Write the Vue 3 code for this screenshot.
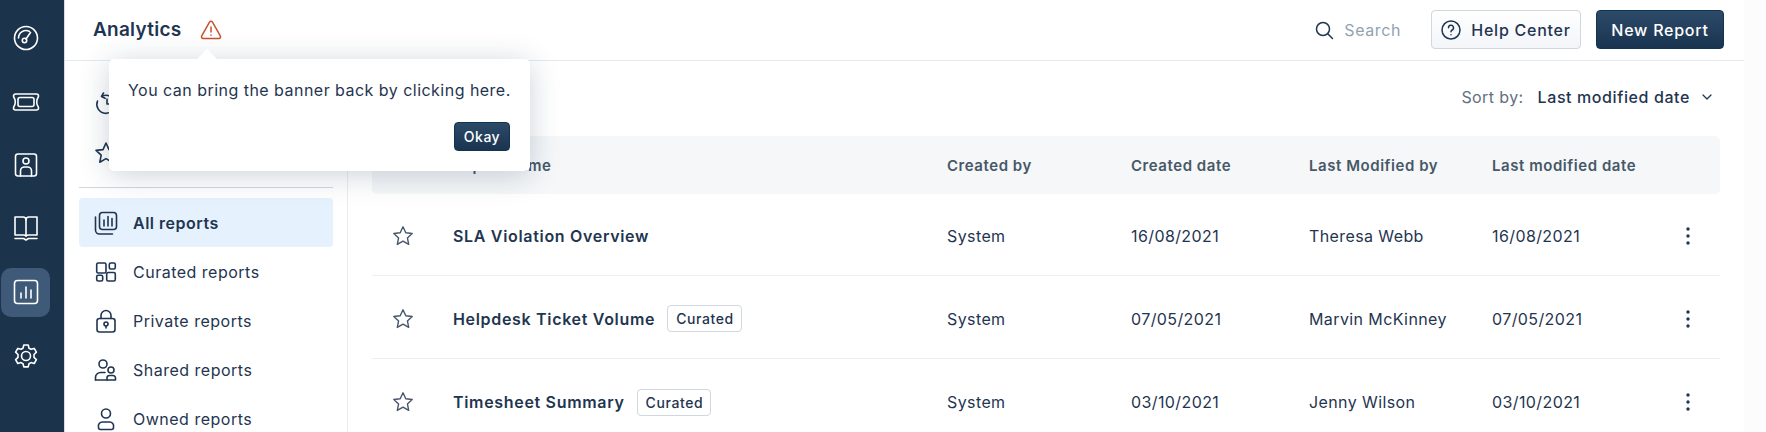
<script setup>
const navItems = [
  { key: 'gauge', active: false },
  { key: 'ticket', active: false },
  { key: 'contact', active: false },
  { key: 'book', active: false },
  { key: 'chart', active: true },
  { key: 'gear', active: false },
]
const sideItems = [
  { label: 'All reports', icon: 'all', active: true },
  { label: 'Curated reports', icon: 'curated' },
  { label: 'Private reports', icon: 'private' },
  { label: 'Shared reports', icon: 'shared' },
  { label: 'Owned reports', icon: 'owned' },
]
const rows = [
  { name: 'SLA Violation Overview', curated: false, by: 'System', created: '16/08/2021', modBy: 'Theresa Webb', mod: '16/08/2021' },
  { name: 'Helpdesk Ticket Volume', curated: true, by: 'System', created: '07/05/2021', modBy: 'Marvin McKinney', mod: '07/05/2021' },
  { name: 'Timesheet Summary', curated: true, by: 'System', created: '03/10/2021', modBy: 'Jenny Wilson', mod: '03/10/2021' },
]
</script>

<template>
  <div class="app">
    <aside class="rail">
      <div v-for="n in navItems" :key="n.key" class="rail-item" :class="{ on: n.active }">
        <svg width="28" height="28" viewBox="0 0 28 28" fill="none" stroke="#fff" stroke-width="1.6" stroke-linecap="round" stroke-linejoin="round">
          <template v-if="n.key === 'gauge'">
            <circle cx="14" cy="14" r="11.5" />
            <path d="M6.5 14a7.5 7.5 0 0 1 11-6.6" />
            <circle cx="12.5" cy="16.5" r="2.2" />
            <path d="M14 15l4.5-6.5" />
          </template>
          <template v-else-if="n.key === 'ticket'">
            <path d="M3.5 6h21a2 2 0 0 1 2 2c0 1-.5 1.500-1 2.500-1 1.500-1 5.500 0 7 .5 1 1 1.500 1 2.500a2 2 0 0 1-2 2h-21a2 2 0 0 1-2-2c0-1 .5-1.500 1-2.500 1-1.500 1-5.500 0-7-.5-1-1-1.500-1-2.500a2 2 0 0 1 2-2z" />
            <rect x="6" y="9.500" width="16" height="9" rx="2" />
          </template>
          <template v-else-if="n.key === 'contact'">
            <rect x="3.500" y="3" width="21" height="22" rx="2.500" />
            <circle cx="14" cy="10" r="3" />
            <path d="M8.500 25v-5a4 4 0 0 1 4-4h3a4 4 0 0 1 4 4v5" />
          </template>
          <template v-else-if="n.key === 'book'">
            <path d="M3 2h8c1.700 0 3 1.300 3 3 0-1.700 1.300-3 3-3h8v18h-8.500c-1 0-2 .5-2.500 1-.5-.5-1.500-1-2.500-1H3z" />
            <path d="M14 5v16" />
            <path d="M3 23.500h8.500l2.500 1.500 2.500-1.500H25" />
          </template>
          <template v-else-if="n.key === 'chart'">
            <rect x="2.500" y="2.500" width="23" height="23" rx="3" />
            <path d="M9 15v5M14 9v11M19 12v8" />
          </template>
          <template v-else>
            <path d="M11.800 3h4.400l.8 3.200 2 1.100 3.200-.9 2.200 3.800-2.400 2.300v2.900l2.400 2.300-2.200 3.800-3.200-.9-2 1.100-.8 3.200h-4.400l-.8-3.200-2-1.100-3.200.9-2.200-3.800 2.400-2.300v-2.900L3.600 10.200l2.200-3.800 3.200.9 2-1.100z" />
            <circle cx="14" cy="14" r="4.500" />
          </template>
        </svg>
      </div>
    </aside>

    <div class="body">
      <header class="topbar">
        <div class="title-wrap">
          <h1 class="title">Analytics</h1>
          <svg class="warn" width="22" height="20" viewBox="0 0 22 20" fill="none" stroke="#c9512e" stroke-width="1.500" stroke-linecap="round" stroke-linejoin="round">
            <path d="M9.500 2.200a1.700 1.700 0 0 1 3 0l7.800 13.700a1.700 1.700 0 0 1-1.500 2.600H3.200a1.700 1.700 0 0 1-1.500-2.600z" />
            <path d="M11 7v5" />
            <path d="M11 15v.2" />
          </svg>
        </div>
        <div class="actions">
          <div class="search">
            <svg width="20" height="20" viewBox="0 0 20 20" fill="none" stroke="#1f3550" stroke-width="1.500" stroke-linecap="round">
              <circle cx="9" cy="9" r="6.500" />
              <path d="M14 14l4.500 4.500" />
            </svg>
            <span>Search</span>
          </div>
          <button class="btn help">
            <svg width="20" height="20" viewBox="0 0 20 20" fill="none" stroke="#1f3550" stroke-width="1.500" stroke-linecap="round">
              <circle cx="10" cy="10" r="9" />
              <path d="M7.500 7.800a2.500 2.500 0 1 1 3.700 2.200c-.8.500-1.200 1-1.200 1.800" />
              <path d="M10 14.700v.1" />
            </svg>
            Help Center
          </button>
          <button class="btn primary">New Report</button>
        </div>
      </header>

      <div class="content">
        <nav class="side">
          <div class="side-top">
            <div class="side-row">
              <svg width="24" height="24" viewBox="0 0 24 24" fill="none" stroke="#1f3550" stroke-width="1.600" stroke-linecap="round" stroke-linejoin="round">
                <path d="M3.500 9a9 9 0 1 0 5-5" /><path d="M9.500 1L7.500 4.500l3.500 1.800" /><path d="M13 7v5h5" />
              </svg>
            </div>
            <div class="side-row">
              <svg width="24" height="24" viewBox="0 0 24 24" fill="none" stroke="#1f3550" stroke-width="1.600" stroke-linejoin="round">
                <path d="M12 2l3 6.600 7 .8-5.200 4.800 1.400 7L12 17.600l-6.200 3.600 1.400-7L2 9.400l7-.8z" />
              </svg>
            </div>
          </div>
          <div class="divider"></div>
          <div v-for="s in sideItems" :key="s.label" class="side-item" :class="{ on: s.active }">
            <svg width="24" height="24" viewBox="0 0 24 24" fill="none" stroke="#1f3550" stroke-width="1.600" stroke-linecap="round" stroke-linejoin="round">
              <template v-if="s.icon === 'all'">
                <rect x="5.500" y="1.500" width="17" height="17" rx="3" />
                <path d="M1.500 6v13a4 4 0 0 0 4 4h13" />
                <path d="M10 9v6M14 5.500V15M18 7.500V15" />
              </template>
              <template v-else-if="s.icon === 'curated'">
                <rect x="2.700" y="3" width="9.300" height="10" rx="1.500" />
                <rect x="15.300" y="3" width="6" height="6" rx="1.500" />
                <rect x="2.700" y="15.300" width="6" height="5.700" rx="1.500" />
                <rect x="12.700" y="12.500" width="8.600" height="8.500" rx="1.500" />
              </template>
              <template v-else-if="s.icon === 'private'">
                <rect x="3" y="9.500" width="18" height="13.500" rx="2.500" />
                <path d="M7 9.500V6.500a5 5 0 0 1 10 0v3" />
                <circle cx="12" cy="15" r="2" />
                <path d="M12 17v2" />
              </template>
              <template v-else-if="s.icon === 'shared'">
                <circle cx="9" cy="6" r="4" />
                <path d="M1.500 22v-2.500a5 5 0 0 1 5-5H11" />
                <path d="M1.500 22H13" />
                <circle cx="17" cy="12" r="3" />
                <path d="M13 22v-2a2.500 2.500 0 0 1 2.500-2.500h3A2.500 2.500 0 0 1 21.500 20v2z" />
              </template>
              <template v-else>
                <circle cx="12" cy="6.500" r="4.500" />
                <path d="M4.500 20a4 4 0 0 1 4-5h7a4 4 0 0 1 4 5v.500a2 2 0 0 1-2 2h-11a2 2 0 0 1-2-2z" />
              </template>
            </svg>
            <span>{{ s.label }}</span>
          </div>
        </nav>

        <main class="main">
          <div class="sort">
            <span class="sort-label">Sort by:</span>
            <span class="sort-value">Last modified date</span>
            <svg width="10" height="6" viewBox="0 0 10 6" fill="none" stroke="#1f3550" stroke-width="1.300" stroke-linecap="round" stroke-linejoin="round">
              <path d="M1 1l4 4 4-4" />
            </svg>
          </div>
          <div class="grid head">
            <span></span>
            <span>Report name</span>
            <span>Created by</span>
            <span>Created date</span>
            <span>Last Modified by</span>
            <span>Last modified date</span>
            <span></span>
          </div>
          <div v-for="r in rows" :key="r.name" class="grid row">
            <svg class="star" width="22" height="22" viewBox="0 0 22 22" fill="none" stroke="#47566a" stroke-width="1.400" stroke-linejoin="round">
              <path d="M11 1.800l2.800 6 6.400.7-4.800 4.400 1.300 6.500L11 16.100l-5.700 3.300 1.300-6.500-4.800-4.400 6.400-.7z" />
            </svg>
            <div class="name">
              <span>{{ r.name }}</span>
              <span v-if="r.curated" class="tag">Curated</span>
            </div>
            <span>{{ r.by }}</span>
            <span>{{ r.created }}</span>
            <span>{{ r.modBy }}</span>
            <span>{{ r.mod }}</span>
            <svg class="dots" width="4" height="18" viewBox="0 0 4 18" fill="#1f3550">
              <circle cx="2" cy="2" r="1.700" /><circle cx="2" cy="9" r="1.700" /><circle cx="2" cy="16" r="1.700" />
            </svg>
          </div>
        </main>
      </div>

      <div class="pop">
        <i class="pop-arrow"></i>
        <p>You can bring the banner back by clicking here.</p>
        <button class="btn primary okay">Okay</button>
      </div>
    </div>
  </div>
</template>

<style>
html, body { margin: 0; height: 432px; overflow: hidden; background: #fff; }
</style>

<style scoped>
* { box-sizing: border-box; }
.app {
  display: flex;
  width: 1766px;
  height: 432px;
  overflow: hidden;
  font-family: Inter, "Liberation Sans", sans-serif;
  color: #1f3550;
  background: #fcfcfd;
}
.rail {
  flex: 0 0 65px;
  background: #1c334c;
  border-right: 1px solid #d5dce5;
  display: flex;
  flex-direction: column;
  padding: 13.5px 0 0 1px;
  gap: 14.5px;
}
.rail-item {
  width: 49px;
  height: 49px;
  border-radius: 10px;
  display: flex;
  align-items: center;
  justify-content: center;
}
.rail-item.on { background: #3e5a78; }
.body {
  position: relative;
  flex: 0 0 1679px;
  background: #fff;
  display: flex;
  flex-direction: column;
}
.topbar {
  height: 61px;
  border-bottom: 1px solid #e5e9ee;
  display: flex;
  align-items: center;
  justify-content: space-between;
  padding: 0 20px 1px 28px;
}
.title-wrap { display: flex; align-items: center; gap: 19px; padding-top: 1px; }
.title { margin: 0; font-size: 19px; font-weight: 600; line-height: 24px; letter-spacing: .25px; }
.warn { display: block; }
.actions { display: flex; align-items: center; }
.search {
  display: flex;
  align-items: center;
  gap: 10px;
  margin-right: 30px;
  margin-left: -2px;
  font-size: 16px;
  color: #92a2b1;
  letter-spacing: .6px;
}
.btn {
  font-family: inherit;
  height: 39px;
  border-radius: 4px;
  font-size: 16px;
  font-weight: 500;
  letter-spacing: .75px;
  display: inline-flex;
  align-items: center;
  justify-content: center;
  cursor: pointer;
  padding: 0;
}
.help {
  width: 150px;
  gap: 10px;
  color: #1f3550;
  background: linear-gradient(#fff, #f3f5f9);
  border: 1px solid #cfd7df;
  margin-right: 15px;
}
.primary {
  width: 128px;
  color: #fff;
  border: 1px solid #12344d;
  background: linear-gradient(#2c4a69, #1a3450);
}
.content { flex: 1; display: flex; min-height: 0; }
.side {
  flex: 0 0 283px;
  border-right: 1px solid #e9edf1;
  padding: 18px 14px 0;
}
.side-top { display: flex; flex-direction: column; }
.side-row { height: 49px; padding-left: 15px; display: flex; align-items: center; }
.divider { height: 1px; background: #cfd7df; margin: 10px 0 10px; }
.side-item {
  height: 49px;
  border-radius: 4px;
  display: flex;
  align-items: center;
  gap: 15px;
  padding-left: 15px;
  font-size: 16px;
  letter-spacing: .5px;
}
.side-item svg { flex: none; }
.side-item.on { background: #e5f2fd; font-weight: 600; }
.main { flex: 1; padding: 0 24px; min-width: 0; }
.sort {
  height: 75px;
  padding: 0 8px 4px 0;
  display: flex;
  align-items: center;
  justify-content: flex-end;
  font-size: 16px;
  letter-spacing: .6px;
}
.sort-label { color: #5f6f81; margin-right: 14px; letter-spacing: .4px; }
.sort-value { font-weight: 500; margin-right: 12px; }
.grid {
  display: grid;
  width: 1348px;
  grid-template-columns: 81px 494px 184px 178px 183px 163px 65px;
  align-items: center;
  font-size: 16px;
  letter-spacing: .4px;
}
.head {
  height: 58px;
  background: #f5f7f9;
  border-radius: 5px;
  color: #475867;
  font-size: 15px;
  font-weight: 600;
  letter-spacing: .55px;
}
.row { height: 83px; padding-top: 3px; border-bottom: 1px solid #ebeff3; }
.head + .row { height: 82px; padding-top: 2px; }
.row:last-child { border-bottom: 0; }
.star { margin-left: 20px; }
.name { display: flex; align-items: center; gap: 12px; font-weight: 600; letter-spacing: .68px; }
.tag {
  height: 27px;
  padding: 0 7px 0 8px;
  display: inline-flex;
  align-items: center;
  border: 1px solid #cfd7df;
  border-radius: 4px;
  font-size: 14px;
  font-weight: 500;
  letter-spacing: .6px;
}
.dots { margin-left: 31px; }
.pop {
  position: absolute;
  left: 44px;
  top: 59px;
  width: 421px;
  height: 112px;
  background: #fff;
  border-radius: 5px;
  box-shadow: 0 4px 30px rgba(18, 52, 77, .22);
  padding: 20px 20px 0 19px;
}
.pop-arrow {
  position: absolute;
  left: 91px;
  top: -7px;
  width: 14px;
  height: 14px;
  background: #fff;
  transform: rotate(45deg);
}
.pop p { margin: 0; font-size: 16px; line-height: 22px; letter-spacing: .47px; white-space: nowrap; }
.okay {
  position: absolute;
  right: 20px;
  bottom: 20px;
  width: 56px;
  height: 29px;
  font-size: 14px;
  font-weight: 500;
  letter-spacing: .5px;
}
</style>
